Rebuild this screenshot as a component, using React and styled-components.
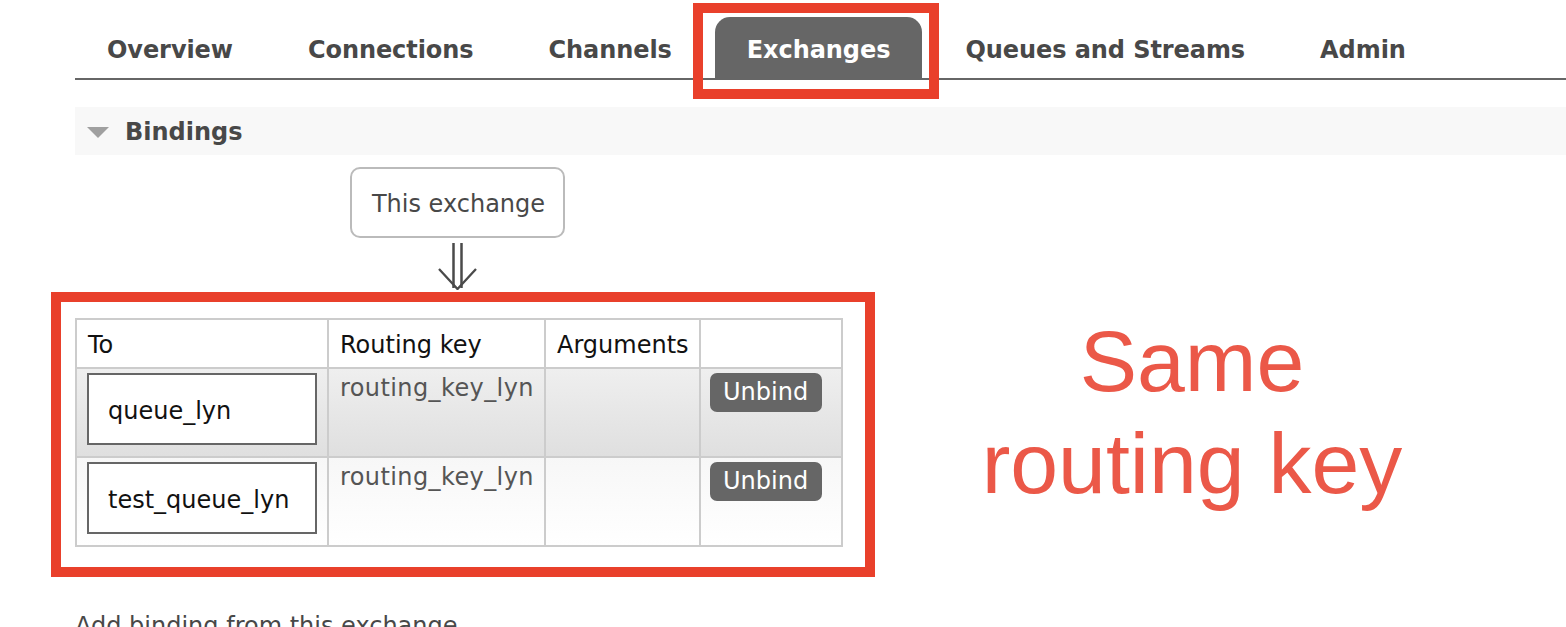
import React from "react";
import styled, { createGlobalStyle } from "styled-components";

const Global = createGlobalStyle`
  html, body { margin: 0; padding: 0; background: #fff; }
  body { font-family: "DejaVu Sans", Verdana, sans-serif; color: #484848; overflow: hidden; }
  * { box-sizing: border-box; }
`;

const ANNOT = "#e9402b";

const Page = styled.div`
  position: relative;
  padding-left: 75px;
  width: 1566px;
  height: 627px;
  overflow: hidden;
`;

const Nav = styled.ul`
  display: flex;
  gap: 11px;
  list-style: none;
  margin: 0;
  padding: 17px 0 0 0;
  border-bottom: 2px solid #666;
`;

const Tab = styled.li`
  position: relative;
  height: 61px;
  display: flex;
  align-items: center;
  padding: 4px 32px 0 32px;
  font-size: 24px;
  font-weight: bold;
  letter-spacing: -0.07px;
  white-space: nowrap;
  color: ${(p) => (p.$active ? "#fff" : "#484848")};
  background: ${(p) => (p.$active ? "#666" : "transparent")};
  border-radius: 15px 15px 0 0;
`;

const Annotation = styled.div`
  position: absolute;
  border: 10px solid ${ANNOT};
  pointer-events: none;
  top: ${(p) => p.$t}px;
  left: ${(p) => p.$l}px;
  right: ${(p) => p.$r}px;
  bottom: ${(p) => p.$b}px;
`;

const SectionHeader = styled.div`
  margin-top: 27px;
  height: 48px;
  background: #f8f8f8;
  display: flex;
  align-items: center;
  gap: 16px;
  padding: 2px 0 0 12px;
  font-size: 24px;
  font-weight: bold;
  color: #484848;
`;

const Triangle = styled.span`
  width: 0;
  height: 0;
  border-left: 11px solid transparent;
  border-right: 11px solid transparent;
  border-top: 11px solid #a0a0a0;
  margin-top: 1px;
`;

const Diagram = styled.div`
  margin-left: 275px;
  margin-top: 12px;
  width: 215px;
  display: flex;
  flex-direction: column;
  align-items: center;
`;

const ExchangeBox = styled.div`
  width: 215px;
  height: 71px;
  border: 2px solid #bbb;
  border-radius: 10px;
  display: flex;
  align-items: center;
  justify-content: center;
  font-size: 24px;
  color: #484848;
  padding: 2px 0 0 2px;
`;

const ArrowSvg = styled.svg`
  display: block;
  margin-top: 5px;
`;

const TableWrap = styled.div`
  position: relative;
  margin-top: 28px;
  width: 766px;
`;

const Table = styled.table`
  border-collapse: collapse;
  border: 2px solid #ccc;
  font-size: 24px;
  table-layout: fixed;
  width: 766px;
`;

const Th = styled.th`
  border: 2px solid #ccc;
  text-align: left;
  font-weight: normal;
  color: #111;
  background: #fff;
  padding: 11px 12px 8px 11px;
  height: 49px;
  white-space: nowrap;
`;

const Row = styled.tr`
  background: ${(p) =>
    p.$alt
      ? "linear-gradient(#f7f7f7, #ffffff)"
      : "linear-gradient(#efefef, #dfdfdf)"};
`;

const Td = styled.td`
  border: 2px solid #ccc;
  vertical-align: top;
  padding: ${(p) =>
    p.$first ? "4px 10px 11px 10px" : p.$action ? "3px 8px 0 9px" : "5px 8px 0 11px"};
  color: #555;
  white-space: nowrap;
  height: 89px;
`;

const KeyText = styled.span`
  letter-spacing: 0.4px;
`;

const QueueBox = styled.div`
  height: 72px;
  border: 2px solid #666;
  background: #fff;
  display: flex;
  align-items: center;
  padding: 3px 0 0 19px;
  color: #111;
  font-size: 24px;
`;

const UnbindButton = styled.button`
  margin-top: 1px;
  height: 39px;
  padding: 0 14px 0 13px;
  border: none;
  border-radius: 7px;
  background: #666;
  color: #fff;
  font-family: "DejaVu Sans", Verdana, sans-serif;
  font-size: 24px;
  line-height: 39px;
`;

const Note = styled.div`
  position: absolute;
  left: 942px;
  top: 310px;
  width: 500px;
  text-align: center;
  font-family: "Liberation Sans", Arial, sans-serif;
  font-size: 86px;
  line-height: 102px;
  color: #eb5848;
`;

const Footer = styled.div`
  margin-top: 65px;
  font-size: 24px;
  color: #484848;
`;

const tabs = ["Overview", "Connections", "Channels", "Exchanges", "Queues and Streams", "Admin"];

const bindings = [
  { to: "queue_lyn", key: "routing_key_lyn" },
  { to: "test_queue_lyn", key: "routing_key_lyn" },
];

export default function App() {
  return (
    <>
      <Global />
      <Page>
        <Nav>
          {tabs.map((t) => (
            <Tab key={t} $active={t === "Exchanges"}>
              {t}
              {t === "Exchanges" && <Annotation $t={-14} $l={-22} $r={-17} $b={-21} />}
            </Tab>
          ))}
        </Nav>
        <SectionHeader>
          <Triangle />
          Bindings
        </SectionHeader>
        <Diagram>
          <ExchangeBox>This exchange</ExchangeBox>
          <ArrowSvg width="40" height="47" viewBox="0 0 40 47">
            <g stroke="#4a4a4a" fill="none">
              <line x1="15.5" y1="0" x2="15.5" y2="45" strokeWidth="2.5" />
              <line x1="23.5" y1="0" x2="23.5" y2="45" strokeWidth="2.5" />
              <polyline points="1,26 19.5,46 38,26" strokeWidth="2.3" />
            </g>
          </ArrowSvg>
        </Diagram>
        <TableWrap>
          <Table>
            <colgroup>
              <col style={{ width: 252 }} />
              <col style={{ width: 217 }} />
              <col style={{ width: 155 }} />
              <col style={{ width: 142 }} />
            </colgroup>
            <thead>
              <tr>
                <Th>To</Th>
                <Th>Routing key</Th>
                <Th>Arguments</Th>
                <Th></Th>
              </tr>
            </thead>
            <tbody>
              {bindings.map((b, i) => (
                <Row key={b.to} $alt={i % 2 === 1}>
                  <Td $first>
                    <QueueBox>{b.to}</QueueBox>
                  </Td>
                  <Td>
                    <KeyText>{b.key}</KeyText>
                  </Td>
                  <Td></Td>
                  <Td $action>
                    <UnbindButton>Unbind</UnbindButton>
                  </Td>
                </Row>
              ))}
            </tbody>
          </Table>
          <Annotation $t={-26} $l={-24} $r={-34} $b={-30} />
        </TableWrap>
        <Note>
          Same
          <br />
          routing key
        </Note>
        <Footer>Add binding from this exchange</Footer>
      </Page>
    </>
  );
}
